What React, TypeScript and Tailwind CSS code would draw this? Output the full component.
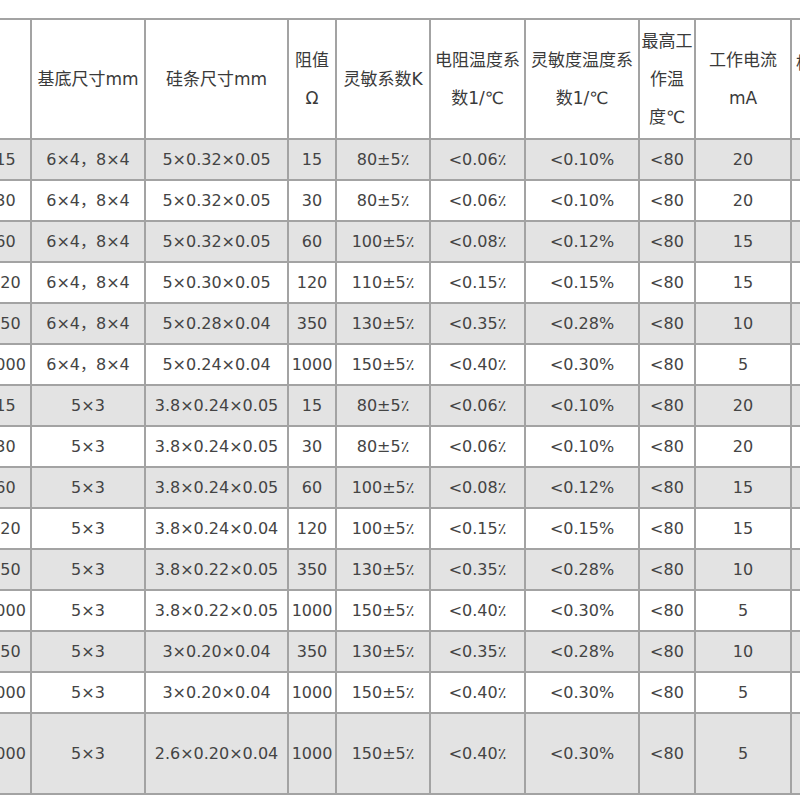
import React from 'react';

type Row = {
  model: string;
  base: string;
  strip: string;
  ohm: string;
  k: string;
  tcr: string;
  tck: string;
  temp: string;
  current: string;
  tall?: boolean;
};

const rows: Row[] = [
  { model: 'BX15', base: '6×4，8×4', strip: '5×0.32×0.05', ohm: '15', k: '80±5٪', tcr: '<0.06٪', tck: '<0.10%', temp: '<80', current: '20' },
  { model: 'BX30', base: '6×4，8×4', strip: '5×0.32×0.05', ohm: '30', k: '80±5٪', tcr: '<0.06٪', tck: '<0.10%', temp: '<80', current: '20' },
  { model: 'BX60', base: '6×4，8×4', strip: '5×0.32×0.05', ohm: '60', k: '100±5٪', tcr: '<0.08٪', tck: '<0.12%', temp: '<80', current: '15' },
  { model: 'BX120', base: '6×4，8×4', strip: '5×0.30×0.05', ohm: '120', k: '110±5٪', tcr: '<0.15٪', tck: '<0.15%', temp: '<80', current: '15' },
  { model: 'BX350', base: '6×4，8×4', strip: '5×0.28×0.04', ohm: '350', k: '130±5٪', tcr: '<0.35٪', tck: '<0.28%', temp: '<80', current: '10' },
  { model: 'BX1000', base: '6×4，8×4', strip: '5×0.24×0.04', ohm: '1000', k: '150±5٪', tcr: '<0.40٪', tck: '<0.30%', temp: '<80', current: '5' },
  { model: 'BX15', base: '5×3', strip: '3.8×0.24×0.05', ohm: '15', k: '80±5٪', tcr: '<0.06٪', tck: '<0.10%', temp: '<80', current: '20' },
  { model: 'BX30', base: '5×3', strip: '3.8×0.24×0.05', ohm: '30', k: '80±5٪', tcr: '<0.06٪', tck: '<0.10%', temp: '<80', current: '20' },
  { model: 'BX60', base: '5×3', strip: '3.8×0.24×0.05', ohm: '60', k: '100±5٪', tcr: '<0.08٪', tck: '<0.12%', temp: '<80', current: '15' },
  { model: 'BX120', base: '5×3', strip: '3.8×0.24×0.04', ohm: '120', k: '100±5٪', tcr: '<0.15٪', tck: '<0.15%', temp: '<80', current: '15' },
  { model: 'BX350', base: '5×3', strip: '3.8×0.22×0.05', ohm: '350', k: '130±5٪', tcr: '<0.35٪', tck: '<0.28%', temp: '<80', current: '10' },
  { model: 'BX1000', base: '5×3', strip: '3.8×0.22×0.05', ohm: '1000', k: '150±5٪', tcr: '<0.40٪', tck: '<0.30%', temp: '<80', current: '5' },
  { model: 'BX350', base: '5×3', strip: '3×0.20×0.04', ohm: '350', k: '130±5٪', tcr: '<0.35٪', tck: '<0.28%', temp: '<80', current: '10' },
  { model: 'BX1000', base: '5×3', strip: '3×0.20×0.04', ohm: '1000', k: '150±5٪', tcr: '<0.40٪', tck: '<0.30%', temp: '<80', current: '5' },
  { model: 'BX1000', base: '5×3', strip: '2.6×0.20×0.04', ohm: '1000', k: '150±5٪', tcr: '<0.40٪', tck: '<0.30%', temp: '<80', current: '5', tall: true },
];

const th = 'border-2 border-[#a3a3a3] font-normal text-[17px] leading-[38px] text-[#3a3a3a] text-center p-0 align-middle';
const td = 'border-2 border-[#a3a3a3] text-[16px] text-[#444] text-center p-0 align-middle whitespace-nowrap';

export default function App() {
  return (
    <div className="w-[800px] h-[800px] overflow-hidden bg-white pt-[18px]" style={{ fontFamily: '"DejaVu Sans", "Noto Sans CJK SC", sans-serif' }}>
      <table className="table-fixed border-collapse w-[933px] ml-[-43px]">
        <colgroup>
          <col className="w-[73px]" />
          <col className="w-[114px]" />
          <col className="w-[143px]" />
          <col className="w-[48px]" />
          <col className="w-[94px]" />
          <col className="w-[95px]" />
          <col className="w-[114px]" />
          <col className="w-[56px]" />
          <col className="w-[96px]" />
          <col className="w-[100px]" />
        </colgroup>
        <thead>
          <tr className="h-[120px]">
            <th className={th + ' text-right pr-[34px]'}>型号</th>
            <th className={th}>基底尺寸mm</th>
            <th className={th}>硅条尺寸mm</th>
            <th className={th}>阻值<br />Ω</th>
            <th className={th}>灵敏系数K</th>
            <th className={th}>电阻温度系<br />数1/℃</th>
            <th className={th}>灵敏度温度系<br />数1/℃</th>
            <th className={th}>最高工<br />作温<br />度℃</th>
            <th className={th}>工作电流<br />mA</th>
            <th className={th + ' text-left pl-[4px] align-top pt-[24px]'}>桥路电压V</th>
          </tr>
        </thead>
        <tbody>
          {rows.map((r, i) => (
            <tr key={i} className={(r.tall ? 'h-[81px] ' : 'h-[41px] ') + (i % 2 === 0 ? 'bg-[#e3e3e3]' : 'bg-white')}>
              <td className={td}>{r.model}</td>
              <td className={td}>{r.base}</td>
              <td className={td}>{r.strip}</td>
              <td className={td}>{r.ohm}</td>
              <td className={td}>{r.k}</td>
              <td className={td}>{r.tcr}</td>
              <td className={td}>{r.tck}</td>
              <td className={td}>{r.temp}</td>
              <td className={td}>{r.current}</td>
              <td className={td}>3~6</td>
            </tr>
          ))}
        </tbody>
      </table>
    </div>
  );
}
